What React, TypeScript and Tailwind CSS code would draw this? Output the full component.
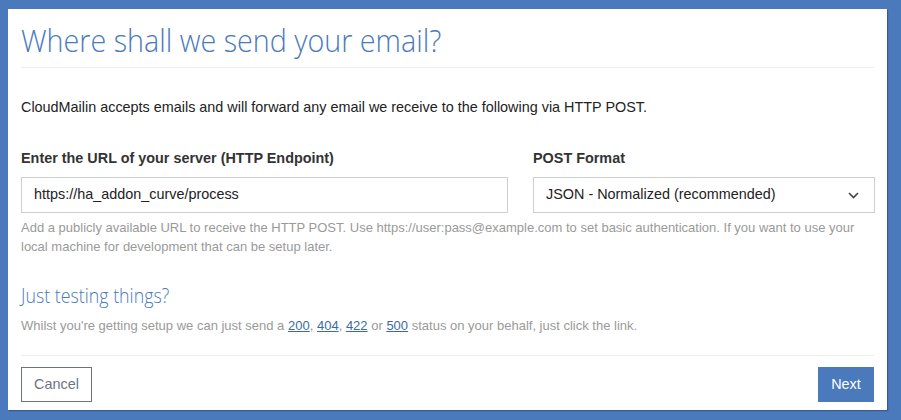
import React from "react";

export default function App() {
  const sans = { fontFamily: '"Liberation Sans", Arial, sans-serif' };
  return (
    <div className="w-[901px] h-[420px] bg-[#4a7abb] pt-[9px] pl-[8px] overflow-hidden" style={sans}>
      <div className="w-[879px] h-[401px] bg-white px-[13px] pt-[11px] shadow-[1px_1px_1px_rgba(0,0,0,0.25)]">
        <h1 className="text-[32px] leading-[40px] font-light text-[#4a7abb] [font-family:'Open_Sans',sans-serif]">
          <span className="inline-block origin-left scale-x-[0.897] whitespace-nowrap">Where shall we send your email?</span>
        </h1>
        <div className="mt-[7px] h-px bg-[#eeeeee]" />
        <p className="mt-[29px] text-[14.4px] leading-[20px] text-[#222]">
          CloudMailin accepts emails and will forward any email we receive to the following via HTTP POST.
        </p>
        <div className="mt-[31px] grid grid-cols-[487px_342px] gap-x-[25px]">
          <div>
            <div className="text-[14.4px] leading-[20px] font-bold text-[#333]">
              Enter the URL of your server (HTTP Endpoint)
            </div>
            <div className="mt-[9px] h-[36px] border border-[#ccd0d4] flex items-center px-[12px] text-[14.4px] text-[#222]">
              https://ha_addon_curve/process
            </div>
          </div>
          <div>
            <div className="text-[14.4px] leading-[20px] font-bold text-[#333]">POST Format</div>
            <div className="mt-[9px] h-[36px] border border-[#ccd0d4] flex items-center justify-between pl-[12px] pr-[15px] text-[14.4px] text-[#222]">
              <span>JSON - Normalized (recommended)</span>
              <svg width="11" height="7" viewBox="0 0 11 7" fill="none">
                <path d="M1 1l4.5 4.5L10 1" stroke="#444" strokeWidth="1.6" />
              </svg>
            </div>
          </div>
        </div>
        <p className="mt-[5px] text-[13px] leading-[19px] text-[#9a9a9a]">
          Add a publicly available URL to receive the HTTP POST. Use https://user:pass@example.com to set basic
          authentication. If you want to use your local machine for development that can be setup later.
        </p>
        <h2 className="mt-[26px] text-[20px] leading-[28px] font-light text-[#4a7abb] [font-family:'Open_Sans',sans-serif]">
          <span className="inline-block origin-left scale-x-[0.89] whitespace-nowrap">Just testing things?</span>
        </h2>
        <p className="mt-[6px] text-[13px] leading-[19px] text-[#9a9a9a]">
          Whilst you're getting setup we can just send a{" "}
          <a className="text-[#3c6aa8] underline">200</a>,{" "}
          <a className="text-[#3c6aa8] underline">404</a>,{" "}
          <a className="text-[#3c6aa8] underline">422</a> or{" "}
          <a className="text-[#3c6aa8] underline">500</a> status on your behalf, just click the link.
        </p>
        <div className="mt-[20px] h-px bg-[#eeeeee]" />
        <div className="mt-[11px] flex justify-between">
          <button className="h-[35px] w-[71px] border border-[#6c757d] text-[14.4px] text-[#6c757d] bg-white">
            Cancel
          </button>
          <button className="h-[35px] w-[56px] bg-[#4a7abb] text-[14.4px] text-white">Next</button>
        </div>
      </div>
    </div>
  );
}
